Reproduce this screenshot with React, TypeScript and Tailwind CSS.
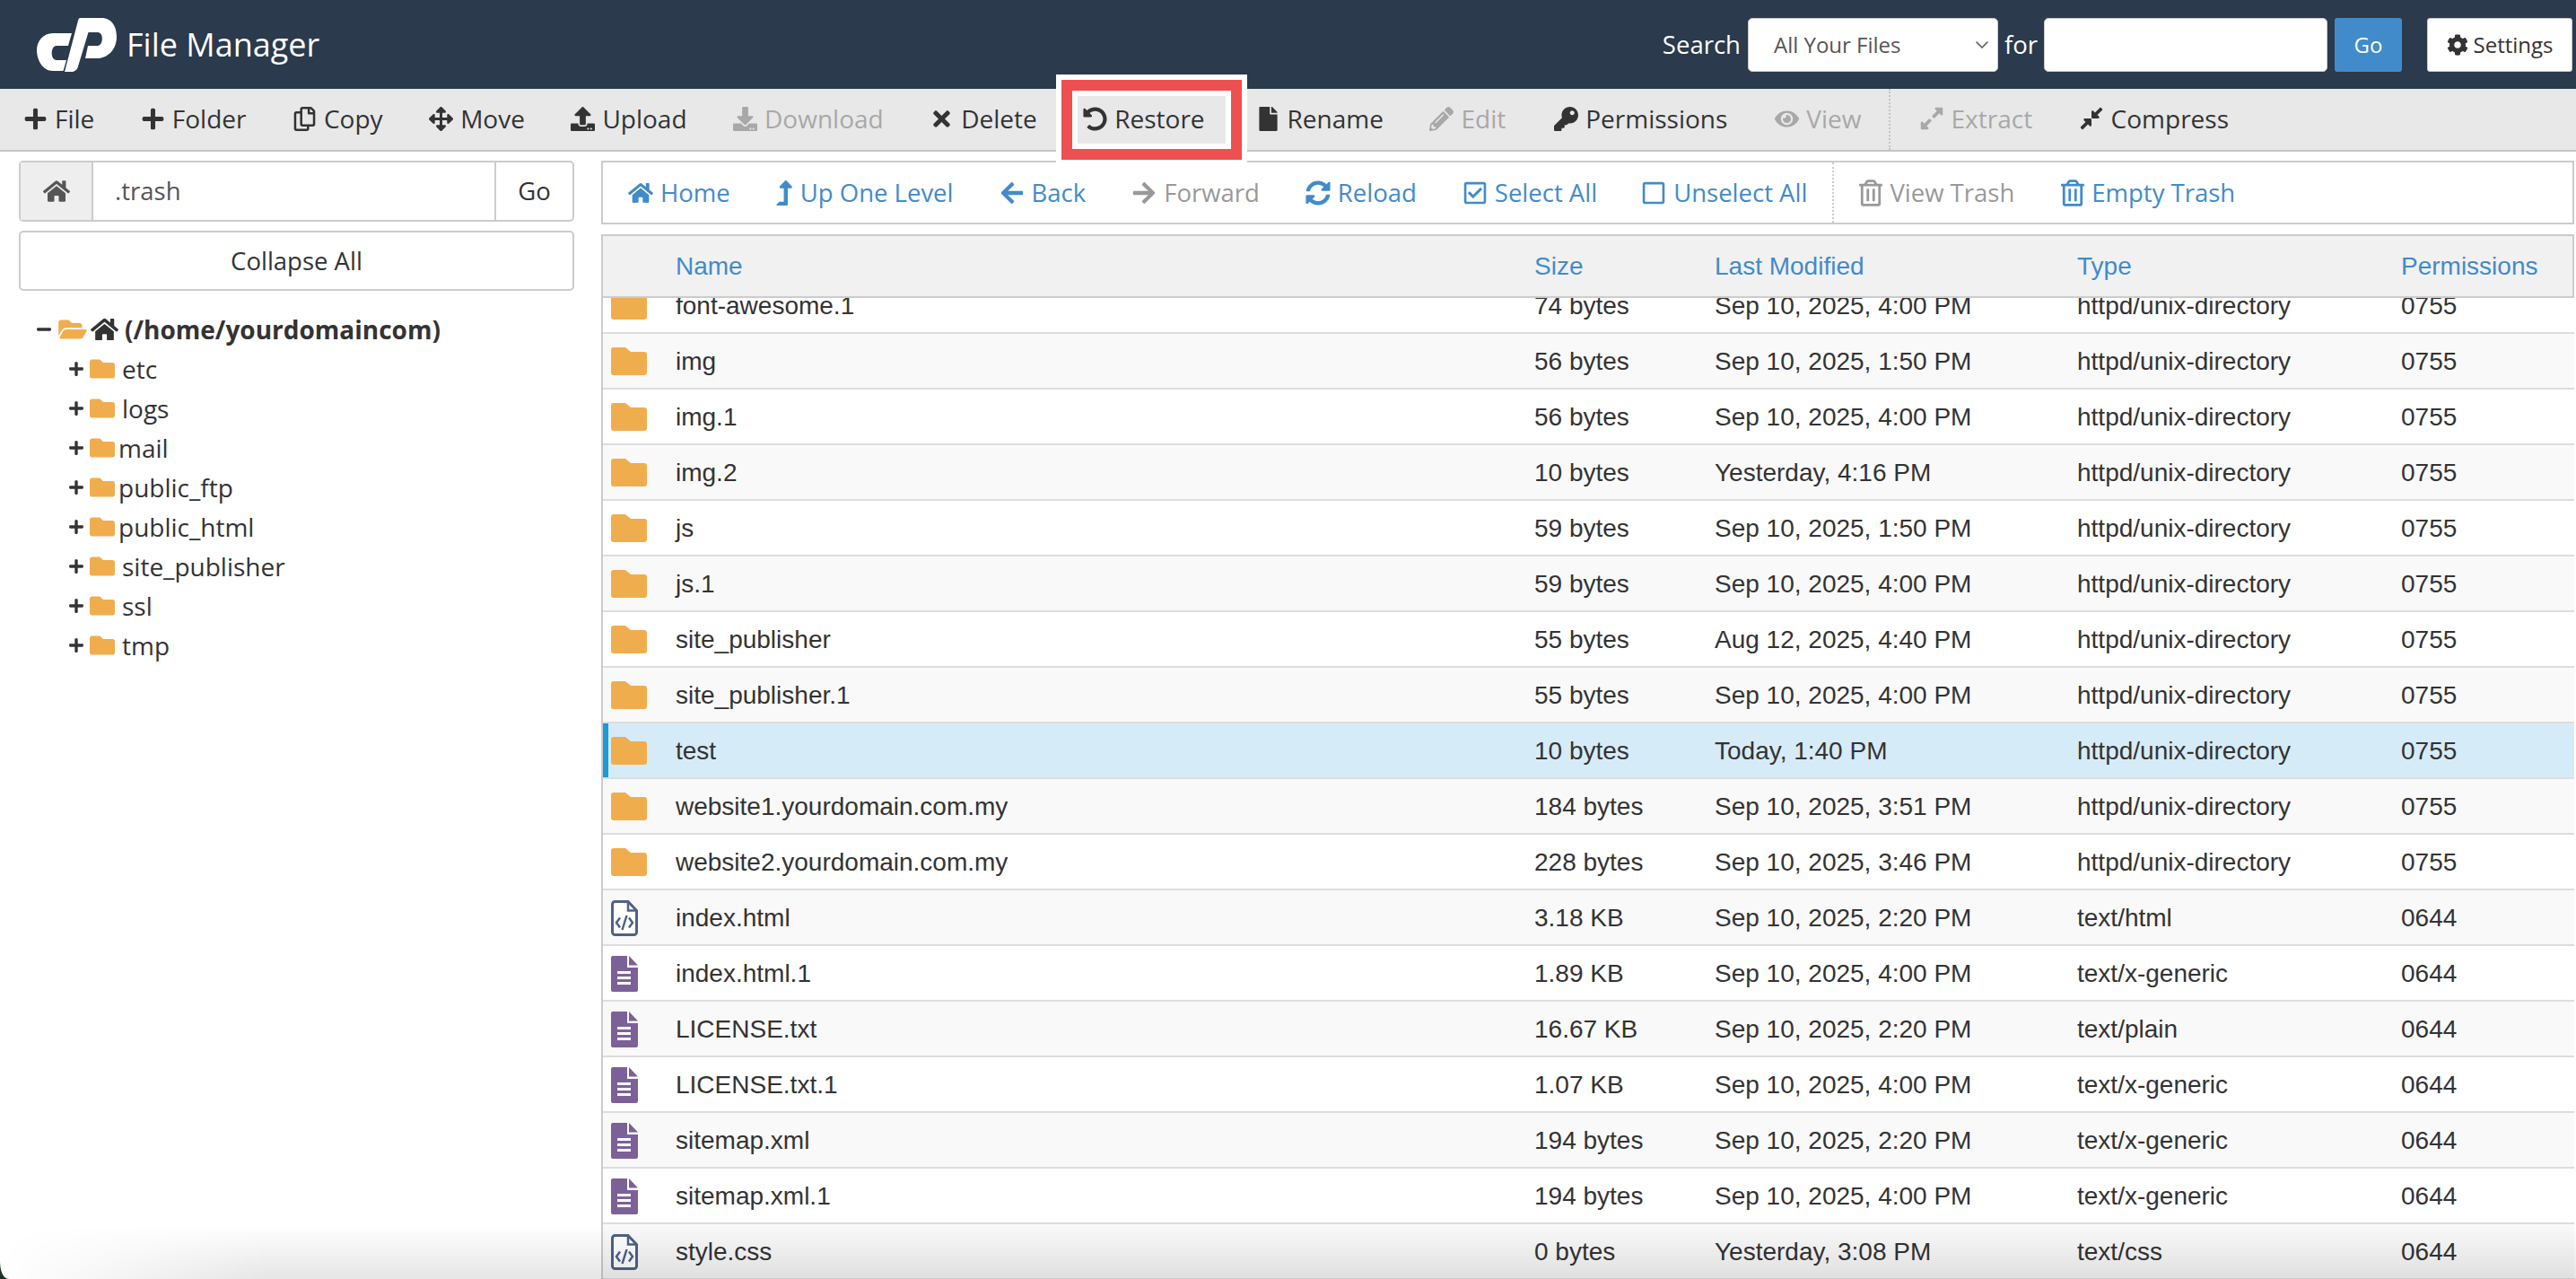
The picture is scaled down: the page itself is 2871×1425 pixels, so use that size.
import {
  FaArrowLeft, FaArrowRight, FaArrowsAlt, FaCog, FaCompressAlt, FaDownload, FaExpandAlt, FaEye, FaFile,
  FaFolder, FaFolderOpen, FaHome, FaKey, FaLevelUpAlt, FaMinus, FaPencilAlt, FaPlus, FaRegCheckSquare, FaRegCopy,
  FaRegSquare, FaRegTrashAlt, FaSyncAlt, FaTimes, FaUndoAlt, FaUpload,
} from "react-icons/fa";
import { ChevronDown } from "lucide-react";

const sans = "font-['Open_Sans',sans-serif]";
const cols = "grid-cols-[81px_957px_201px_404px_361px_1fr]";

const actions = [
  { icon: FaPlus, label: "File" },
  { icon: FaPlus, label: "Folder" },
  { icon: FaRegCopy, label: "Copy" },
  { icon: FaArrowsAlt, label: "Move" },
  { icon: FaUpload, label: "Upload" },
  { icon: FaDownload, label: "Download", off: true },
  { icon: FaTimes, label: "Delete" },
  { icon: FaUndoAlt, label: "Restore", gap: "mr-[57px]" },
  { icon: FaFile, label: "Rename" },
  { icon: FaPencilAlt, label: "Edit", off: true, gap: "mr-[54px]" },
  { icon: FaKey, label: "Permissions", gap: "mr-[53px]" },
  { icon: FaEye, label: "View", off: true, gap: "mr-[30px]" },
];

const nav = [
  { icon: FaHome, label: "Home", w: "w-[28px]" },
  { icon: FaLevelUpAlt, label: "Up One Level", w: "w-[20px]" },
  { icon: FaArrowLeft, label: "Back", w: "w-[28px]" },
  { icon: FaArrowRight, label: "Forward", w: "w-[28px]", off: true },
  { icon: FaSyncAlt, label: "Reload", w: "w-[28px]" },
  { icon: FaRegCheckSquare, label: "Select All", w: "w-[28px]" },
  { icon: FaRegSquare, label: "Unselect All", w: "w-[28px]" },
];

const tree = [
  { name: "etc", gap: "ml-[8px]" },
  { name: "logs", gap: "ml-[8px]" },
  { name: "mail", gap: "ml-[4px]" },
  { name: "public_ftp", gap: "ml-[4px]" },
  { name: "public_html", gap: "ml-[4px]" },
  { name: "site_publisher", gap: "ml-[8px]" },
  { name: "ssl", gap: "ml-[8px]" },
  { name: "tmp", gap: "ml-[8px]" },
];

const dir = "httpd/unix-directory";
const rows = [
  ["folder", "font-awesome.1", "74 bytes", "Sep 10, 2025, 4:00 PM", dir, "0755"],
  ["folder", "img", "56 bytes", "Sep 10, 2025, 1:50 PM", dir, "0755"],
  ["folder", "img.1", "56 bytes", "Sep 10, 2025, 4:00 PM", dir, "0755"],
  ["folder", "img.2", "10 bytes", "Yesterday, 4:16 PM", dir, "0755"],
  ["folder", "js", "59 bytes", "Sep 10, 2025, 1:50 PM", dir, "0755"],
  ["folder", "js.1", "59 bytes", "Sep 10, 2025, 4:00 PM", dir, "0755"],
  ["folder", "site_publisher", "55 bytes", "Aug 12, 2025, 4:40 PM", dir, "0755"],
  ["folder", "site_publisher.1", "55 bytes", "Sep 10, 2025, 4:00 PM", dir, "0755"],
  ["folder", "test", "10 bytes", "Today, 1:40 PM", dir, "0755"],
  ["folder", "website1.yourdomain.com.my", "184 bytes", "Sep 10, 2025, 3:51 PM", dir, "0755"],
  ["folder", "website2.yourdomain.com.my", "228 bytes", "Sep 10, 2025, 3:46 PM", dir, "0755"],
  ["code", "index.html", "3.18 KB", "Sep 10, 2025, 2:20 PM", "text/html", "0644"],
  ["text", "index.html.1", "1.89 KB", "Sep 10, 2025, 4:00 PM", "text/x-generic", "0644"],
  ["text", "LICENSE.txt", "16.67 KB", "Sep 10, 2025, 2:20 PM", "text/plain", "0644"],
  ["text", "LICENSE.txt.1", "1.07 KB", "Sep 10, 2025, 4:00 PM", "text/x-generic", "0644"],
  ["text", "sitemap.xml", "194 bytes", "Sep 10, 2025, 2:20 PM", "text/x-generic", "0644"],
  ["text", "sitemap.xml.1", "194 bytes", "Sep 10, 2025, 4:00 PM", "text/x-generic", "0644"],
  ["code", "style.css", "0 bytes", "Yesterday, 3:08 PM", "text/css", "0644"],
];

function Logo() {
  return (
    <svg viewBox="0 0 90 60" className="h-[60px] w-[90px] shrink-0" fill="#fff">
      <path d="M18 17H39L35 31H22C15 31 15 47 22 47H33L29.5 59H18C6 59 0 46 0 36 0 26 7 17 18 17z" />
      <path d="M48 0H72C84 0 89 10 89 21 89 36 78 45 68 45H54L57 31H68C74 31 75 16 68 16H57.5L46 54C45 58 42 60 38 60H31L46 3C46.5 1 47 0 48 0z" />
    </svg>
  );
}

function FolderIcon() {
  return (
    <svg viewBox="0 0 40 31" className="h-[31px] w-[40px]" fill="#f0ad4e">
      <path d="M3 0H16L22 5H37a3 3 0 0 1 3 3V28a3 3 0 0 1-3 3H3a3 3 0 0 1-3-3V3a3 3 0 0 1 3-3z" />
    </svg>
  );
}

function TextFile() {
  return (
    <svg viewBox="0 0 30 40" className="h-[40px] w-[30px]" fill="#7c6199">
      <path d="M2 0H18V13H30V38a2 2 0 0 1-2 2H2a2 2 0 0 1-2-2V2a2 2 0 0 1 2-2z" />
      <path d="M20 0L30 10.5H20z" />
      <path d="M7 17h15v3H7zM7 23h15v3H7zM7 29h15v3H7z" fill="#fff" />
    </svg>
  );
}

function CodeFile() {
  return (
    <svg viewBox="0 0 30 40" className="h-[40px] w-[30px]">
      <path d="M4.500 1.500H19L28.500 11.500V35.500a3 3 0 0 1-3 3H4.500a3 3 0 0 1-3-3V4.500a3 3 0 0 1 3-3z" fill="#fff" stroke="#4f6286" strokeWidth="3" />
      <path d="M19 1.500V11.500H28.500" fill="none" stroke="#4f6286" strokeWidth="2.500" />
      <path d="M10 19.500L6 25l4 5.500M20 19.500L24 25l-4 5.500M17.500 17L12.500 33" fill="none" stroke="#4f6286" strokeWidth="2.500" />
    </svg>
  );
}

function RowIcon({ kind }: { kind: string }) {
  if (kind === "folder") return <FolderIcon />;
  if (kind === "code") return <CodeFile />;
  return <TextFile />;
}

export default function App() {
  return (
    <div className={`relative flex h-[1425px] w-[2871px] flex-col overflow-hidden bg-white text-[#333] ${sans}`}>
      <header className="flex h-[99px] shrink-0 items-center justify-between bg-[#2b3a4c] pl-[41px] pr-[4px] text-white">
        <div className="flex items-center gap-[10px]">
          <Logo />
          <span className="text-[36px]">File Manager</span>
        </div>
        <div className="flex items-center text-[27.500px]">
          <span className="mr-[8px]">Search</span>
          <div className="flex h-[60px] w-[279px] items-center justify-between rounded-[5px] border border-[#ccc] bg-white pl-[28px] pr-[5px] text-[24px] text-[#555]">
            All Your Files
            <ChevronDown className="h-[24px] w-[24px] text-[#555]" strokeWidth={1.5} />
          </div>
          <span className="mx-[7px]">for</span>
          <div className="h-[60px] w-[316px] rounded-[5px] border border-[#ccc] bg-white" />
          <button className="ml-[8px] h-[60px] w-[75px] rounded-[3px] bg-[#428bca] text-[24px]">Go</button>
          <button className="ml-[28px] flex h-[60px] w-[162px] items-center justify-center gap-[6px] rounded-[3px] border border-[#ccc] bg-white text-[24px] text-[#333]">
            <FaCog className="h-[24px] w-[24px]" />
            Settings
          </button>
        </div>
      </header>

      <div className="flex h-[70px] shrink-0 items-center border-b-[2px] border-[#c4c4c4] bg-[#e8e8e8] pl-[26px] text-[28px]">
        {actions.map((a) => (
          <div key={a.label} className={`flex items-center gap-[8px] pb-[2px] ${a.gap ?? "mr-[51.500px]"} ${a.off ? "text-[#a8a8a8]" : ""}`}>
            <a.icon className="h-[27px] w-[27px]" />
            {a.label}
          </div>
        ))}
        <div className="mr-[32px] h-full border-l-[2px] border-dotted border-[#c4c4c4]" />
        <div className="mr-[51.500px] flex items-center gap-[8px] pb-[2px] text-[#a8a8a8]">
          <FaExpandAlt className="h-[28px] w-[28px]" />
          Extract
        </div>
        <div className="flex items-center gap-[8px] pb-[2px]">
          <FaCompressAlt className="h-[28px] w-[28px]" />
          Compress
        </div>
      </div>

      <div className="flex min-h-0 flex-1">
        <aside className="w-[670px] shrink-0 pl-[21px] pr-[30px] pt-[10px]">
          <div className="flex h-[68px] rounded-[5px] border-[2px] border-[#ccc] text-[27.500px]">
            <div className="flex w-[81px] items-center justify-center border-r-[2px] border-[#ccc] bg-[#eee] text-[#555]">
              <FaHome className="h-[30px] w-[30px]" />
            </div>
            <div className="flex flex-1 items-center pl-[24px] text-[#555]">.trash</div>
            <div className="flex w-[87px] items-center justify-center border-l-[2px] border-[#ccc]">Go</div>
          </div>
          <button className="mt-[10px] h-[67px] w-full rounded-[5px] border-[2px] border-[#ccc] text-[27.500px]">Collapse All</button>
          <div className="mt-[21px] flex h-[44px] items-center pl-[19px] text-[28px] font-bold">
            <FaMinus className="h-[18px] w-[18px]" />
            <FaFolderOpen className="ml-[7px] h-[28px] w-[32px] text-[#f0ad4e]" />
            <FaHome className="ml-[4px] h-[28px] w-[31px]" />
            <span className="ml-[7px]">(/home/yourdomaincom)</span>
          </div>
          {tree.map((t) => (
            <div key={t.name} className="flex h-[44px] items-center pl-[55px] text-[28px]">
              <FaPlus className="h-[18px] w-[18px]" />
              <FaFolder className="ml-[6px] h-[28px] w-[28px] text-[#f0ad4e]" />
              <span className={t.gap}>{t.name}</span>
            </div>
          ))}
        </aside>

        <main className="flex min-w-0 flex-1 flex-col pt-[10px] pr-[2px]">
          <div className="flex h-[71px] shrink-0 items-center border-[2px] border-[#ccc] pl-[28px] text-[27.500px] text-[#428bca]">
            {nav.map((n) => (
              <div
                key={n.label}
                className={`flex items-center gap-[8px] ${n.label === "Unselect All" ? "mr-[28px]" : n.label === "Home" ? "mr-[50px]" : n.label === "Select All" ? "mr-[49px]" : "mr-[51px]"} ${n.off ? "text-[#999]" : ""}`}
              >
                <n.icon className={`h-[28px] ${n.w}`} />
                {n.label}
              </div>
            ))}
            <div className="mr-[28px] h-full border-l-[2px] border-dotted border-[#ccc]" />
            <div className="mr-[52px] flex items-center gap-[8px] text-[#999]">
              <FaRegTrashAlt className="h-[30px] w-[26px]" />
              View Trash
            </div>
            <div className="flex items-center gap-[8px]">
              <FaRegTrashAlt className="h-[30px] w-[26px]" />
              Empty Trash
            </div>
          </div>

          <div className="mt-[11px] flex min-h-0 flex-1 flex-col border-l-[2px] border-[#ccc] font-['Liberation_Sans',sans-serif] text-[28px]">
            <div className={`relative z-10 grid h-[71px] shrink-0 items-center border-y-[2px] border-r-[2px] border-[#ccc] bg-[#f1f1f1] text-[#428bca] ${cols}`}>
              <span />
              <span>Name</span>
              <span>Size</span>
              <span>Last Modified</span>
              <span>Type</span>
              <span>Permissions</span>
            </div>
            <div className="-mt-[22px] min-h-0">
              {rows.map((r, i) => (
                <div
                  key={r[1]}
                  className={`grid h-[62px] items-center border-b-[2px] border-[#ddd] pt-[1px] ${cols} ${
                    r[1] === "test" ? "bg-[#d6ebf8] shadow-[inset_6px_0_0_#1a9ad6]" : i % 2 ? "bg-[#f9f9f9]" : "bg-white"
                  }`}
                >
                  <span className="flex pl-[9px]">
                    <RowIcon kind={r[0]} />
                  </span>
                  <span>{r[1]}</span>
                  <span>{r[2]}</span>
                  <span>{r[3]}</span>
                  <span>{r[4]}</span>
                  <span>{r[5]}</span>
                </div>
              ))}
            </div>
          </div>
        </main>
      </div>

      {/* highlight drawn over the toolbar */}
      <div className="absolute left-[1177px] top-[83px] h-[101px] w-[213px] border-[6px] border-white">
        <div className="h-full w-full border-[12px] border-[#ee5050]">
          <div className="h-full w-full border-[6px] border-white" />
        </div>
      </div>
      <div className="pointer-events-none absolute inset-x-0 bottom-0 h-[60px] bg-gradient-to-b from-transparent to-black/10 [mask-image:linear-gradient(to_right,transparent,black_300px)]" />
      <svg viewBox="0 0 10 20" className="absolute bottom-0 left-0 h-[20px] w-[10px]" fill="#1e3324">
        <path d="M0 0C0 10 3 20 10 20H0z" />
      </svg>
    </div>
  );
}
